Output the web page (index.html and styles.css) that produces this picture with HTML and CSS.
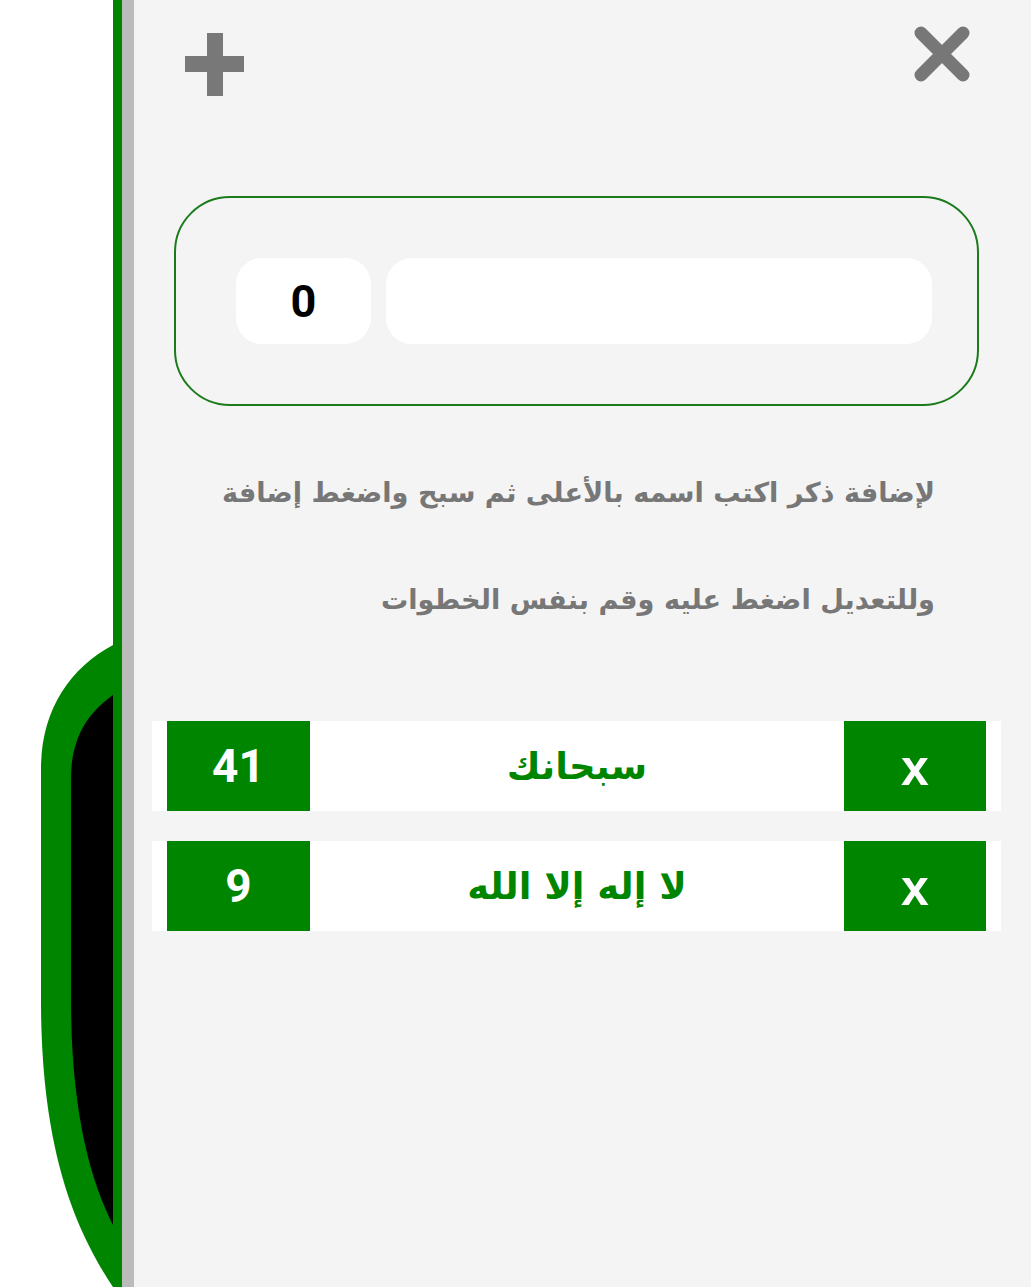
FILE: index.html
```html
<!DOCTYPE html>
<html lang="ar">
<head>
<meta charset="utf-8">
<title>سبحة</title>
<link rel="stylesheet" href="styles.css">
</head>
<body>
<div class="backdrop">
  <svg class="device" width="113" height="1287" viewBox="0 0 113 1287" aria-hidden="true">
    <path d="M113 645 C70 668 41 710 41 768 L41 1000 C41 1150 75 1230 113 1287 Z" fill="#008500"/>
    <path d="M113 695 C86 714 71 740 71 778 L71 1000 C71 1110 90 1180 113 1225 Z" fill="#000"/>
  </svg>
</div>
<div class="rail-green"></div>
<div class="rail-gray"></div>
<main class="panel" dir="rtl">
  <div class="toolbar">
    <button class="icon-btn close-btn" aria-label="إغلاق">
      <svg width="56" height="56" viewBox="0 0 56 56"><path d="M7 7 L49 49 M49 7 L7 49" stroke="#777" stroke-width="13" stroke-linecap="round"/></svg>
    </button>
    <button class="icon-btn add-btn" aria-label="إضافة">
      <svg width="59" height="63" viewBox="0 0 59 63"><rect x="22" y="0" width="16" height="63" fill="#787878"/><rect x="0" y="23" width="59" height="16" fill="#787878"/></svg>
    </button>
  </div>
  <div class="entry">
    <div class="name-field"></div>
    <div class="count-field">0</div>
  </div>
  <p class="hint">لإضافة ذكر اكتب اسمه بالأعلى ثم سبح واضغط إضافة</p>
  <p class="hint hint-second">وللتعديل اضغط عليه وقم بنفس الخطوات</p>
  <ul class="list">
    <li class="row">
      <span class="del">x</span>
      <span class="name">سبحانك</span>
      <span class="num">41</span>
    </li>
    <li class="row">
      <span class="del">x</span>
      <span class="name">لا إله إلا الله</span>
      <span class="num">9</span>
    </li>
  </ul>
</main>
</body>
</html>
```

FILE: styles.css
```css
html, body {
  margin: 0;
  padding: 0;
}
body {
  display: flex;
  height: 1287px;
  overflow: hidden;
  background: #fff;
  font-family: "DejaVu Sans", "Noto Sans", sans-serif;
}
.backdrop {
  width: 113px;
  flex: none;
  position: relative;
}
.device {
  position: absolute;
  left: 0;
  top: 0;
}
.rail-green {
  width: 9px;
  flex: none;
  background: #008500;
}
.rail-gray {
  width: 12px;
  flex: none;
  background: #bbbbbb;
}
.panel {
  flex: 1;
  background: #f4f4f4;
  display: flex;
  flex-direction: column;
}
.toolbar {
  height: 100px;
  display: flex;
  justify-content: space-between;
  align-items: flex-start;
  padding-right: 61px;
  padding-left: 51px;
}
.icon-btn {
  border: 0;
  background: none;
  padding: 0;
  display: block;
}
.icon-btn svg { display: block; }
.close-btn { margin-top: 26px; }
.add-btn { margin-top: 33px; }
.entry {
  margin-top: 96px;
  margin-right: 52px;
  margin-left: 40px;
  border: 2px solid #1b7b1b;
  border-radius: 56px;
  padding: 60px 45px 60px 60px;
  display: flex;
  gap: 15px;
}
.name-field {
  flex: 1;
  height: 86px;
  background: #fff;
  border-radius: 26px;
}
.count-field {
  width: 135px;
  height: 86px;
  background: #fff;
  border-radius: 26px;
  display: flex;
  align-items: center;
  justify-content: center;
  font-family: Roboto, "Liberation Sans", sans-serif;
  font-weight: bold;
  font-size: 45px;
  color: #000;
}
.hint {
  margin: 67px 96px 0 0;
  line-height: 40px;
  font-size: 27.2px;
  font-weight: bold;
  color: #777;
  text-align: right;
}
.hint-second {
  margin-top: 67px;
}
.list {
  list-style: none;
  margin: 101px 30px 0 18px;
  padding: 0;
  display: flex;
  flex-direction: column;
  gap: 30px;
}
.row {
  height: 90px;
  background: #fff;
  padding: 0 15px;
  display: flex;
}
.del, .num {
  width: 142px;
  flex: none;
  background: #008500;
  color: #fff;
  display: flex;
  align-items: center;
  justify-content: center;
  font-family: Roboto, "Liberation Sans", sans-serif;
  font-weight: bold;
}
.num { width: 143px; font-size: 46px; }
.del { font-size: 50px; padding-top: 4px; box-sizing: border-box; font-family: "Liberation Sans", Arial, sans-serif; }
.name {
  flex: 1;
  display: flex;
  align-items: center;
  justify-content: center;
  color: #008500;
  font-weight: bold;
  font-size: 37px;
}
```
